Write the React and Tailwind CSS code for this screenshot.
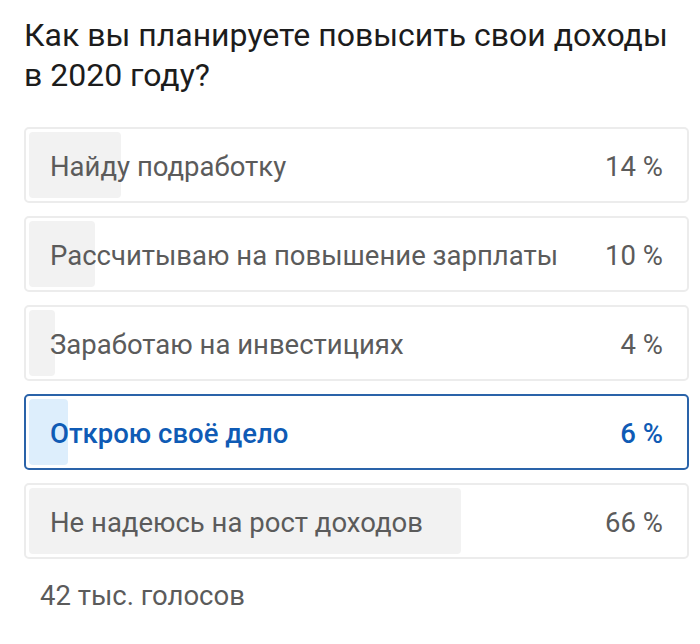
import React from "react";

const options = [
  { label: "Найду подработку", pct: 14 },
  { label: "Рассчитываю на повышение зарплаты", pct: 10 },
  { label: "Заработаю на инвестициях", pct: 4 },
  { label: "Открою своё дело", pct: 6, selected: true },
  { label: "Не надеюсь на рост доходов", pct: 66 },
];

function Row({ label, pct, selected }) {
  return (
    <div
      className={
        "grid h-[76px] rounded-[5px] border-2 p-[3px] " +
        (selected ? "border-[#2a63a9]" : "border-[#ececec]")
      }
    >
      <div className="col-start-1 row-start-1 flex h-full">
        <div
          className={
            "h-full rounded-[4px] " + (selected ? "bg-[#ddeefc]" : "bg-[#f2f2f2]")
          }
          style={{ width: pct + "%" }}
        />
      </div>
      <div
        className={
          "col-start-1 row-start-1 flex items-center justify-between pl-[21px] pr-[21px] pt-[4px] text-[27.5px] leading-none " +
          (selected ? "font-medium text-[#0f5bb5]" : "text-[#5b5b5b]")
        }
      >
        <span>{label}</span>
        <span>{pct} %</span>
      </div>
    </div>
  );
}

export default function App() {
  return (
    <div
      className="min-h-[644px] w-[700px] bg-white pl-[24px] pt-[15px]"
      style={{ fontFamily: "Roboto, 'Noto Sans', sans-serif" }}
    >
      <h1 className="w-[665px] text-[32px] font-normal leading-[40px] text-[#1c1c1c]">
        Как вы планируете повысить свои доходы
        <br />в 2020 году?
      </h1>
      <div className="mt-[32px] flex w-[665px] flex-col gap-[13px]">
        {options.map((o) => (
          <Row key={o.label} {...o} />
        ))}
      </div>
      <div className="mt-[23px] pl-[16px] text-[27.5px] leading-none text-[#5b5b5b]">
        42 тыс. голосов
      </div>
    </div>
  );
}
